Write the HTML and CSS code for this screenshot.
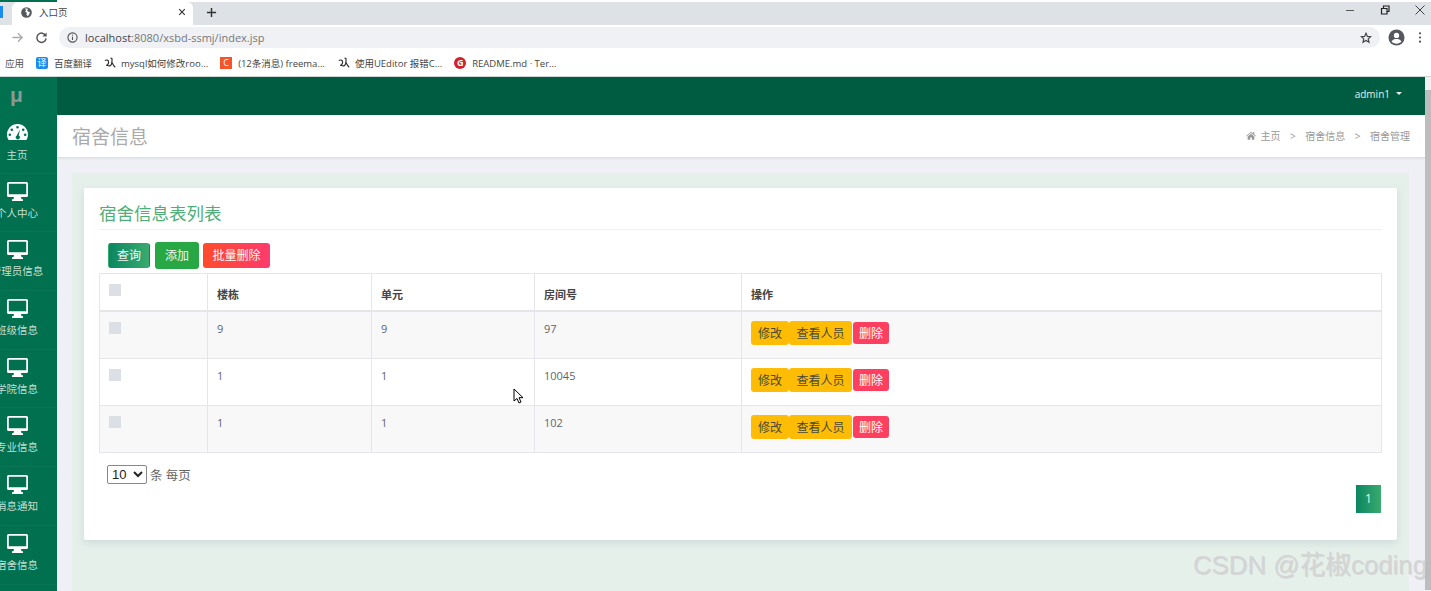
FILE: index.html
```html
<!DOCTYPE html>
<html lang="zh-CN">
<head>
    <meta charset="UTF-8">
    <title>入口页</title>
    <link rel="stylesheet" href="styles.css">
</head>
<body>
    <!-- 浏览器外框 -->
    <div class="top-edge"><span></span></div>
    <div class="tabstrip">
        <span class="prev-tab"></span>
        <div class="tab">
            <svg class="globe" viewBox="0 0 12 12"><circle cx="6" cy="6" r="5.800" fill="#55585c"/><path d="M3.500 1.800l2.300 1.200-1.300 1.800 1.800 1.400-.3 2.300 1.500 1.700 1.600-2.700.6-2-2.200-.6-.9-1.500 1.500-1.300-2-.6z" fill="#fff"/></svg>
            <span class="tab-title">入口页</span>
            <svg class="tab-close" viewBox="0 0 10 10"><path d="M1.500 1.500l7 7M8.500 1.500l-7 7" stroke="#333" stroke-width="1.400"/></svg>
        </div>
        <svg class="tab-new" viewBox="0 0 12 12"><path d="M6 1v10M1 6h10" stroke="#333" stroke-width="1.600"/></svg>
        <div class="win-btns">
            <svg viewBox="0 0 12 12"><path d="M2 6.500h8" stroke="#555" stroke-width="1"/></svg>
            <svg viewBox="0 0 12 12"><path d="M2.500 4.500h5.500v5.500h-5.500zM4.500 4.500v-2.500h5.500v5.500h-2" fill="none" stroke="#222" stroke-width="1.200"/></svg>
            <svg viewBox="0 0 12 12"><path d="M1.500 1.500l9 9M10.500 1.500l-9 9" stroke="#444" stroke-width="1"/></svg>
        </div>
    </div>
    <div class="toolbar">
        <svg class="nav-fwd" viewBox="0 0 14 14"><path d="M1.500 7h10.500M7.500 2.500l4.500 4.500-4.500 4.500" fill="none" stroke="#aaa" stroke-width="1.400"/></svg>
        <svg class="nav-reload" viewBox="0 0 14 14"><path d="M11.500 5a5 5 0 1 0 .5 3" fill="none" stroke="#555" stroke-width="1.600"/><path d="M12.500 1.500v4.500h-4.500z" fill="#555"/></svg>
        <div class="address">
            <svg class="info" viewBox="0 0 12 12"><circle cx="6" cy="6" r="5" fill="none" stroke="#555" stroke-width="1.200"/><path d="M6 5.200v3.600M6 3v1.200" stroke="#555" stroke-width="1.200"/></svg>
            <span class="url"><b>localhost</b>:8080/xsbd-ssmj/index.jsp</span>
            <svg class="star" viewBox="0 0 12 12"><path d="M6 1.300l1.400 3.100 3.300.3-2.500 2.200.8 3.300L6 8.500l-3 1.700.8-3.300L1.300 4.700l3.300-.3z" fill="none" stroke="#444" stroke-width="1.200"/></svg>
        </div>
        <svg class="avatar" viewBox="0 0 18 18"><circle cx="9" cy="9" r="8.500" fill="#55585c"/><circle cx="9" cy="6.800" r="2.800" fill="#fff"/><path d="M3.800 13.200c1.200-2 3.200-2.600 5.200-2.600s4 .6 5.200 2.600c-1.200 1.500-3.100 2.300-5.200 2.300s-4-.8-5.200-2.300z" fill="#fff"/></svg>
        <svg class="dots" viewBox="0 0 4 14"><circle cx="2" cy="2.500" r="1.200" fill="#555"/><circle cx="2" cy="7" r="1.200" fill="#555"/><circle cx="2" cy="11.500" r="1.200" fill="#555"/></svg>
    </div>
    <div class="bookmarks">
        <span class="bm-apps">应用</span>
        <a class="bm bm-1"><i class="bm-icon blue">译</i>百度翻译</a>
        <a class="bm bm-2"><svg class="bm-svg" viewBox="0 0 12 12"><path d="M.8 3.500c1.800-1 3.600-.5 3.800 1.300.2 2-1.300 3.600-2.500 3.500M3.500 8.300c1.700 1.200 3.300.6 4-1.300.5-1.600.7-3.500.5-5.500M6.500 1l1.800.6M8 5.500c.8 1.800 1.800 3.500 3.200 4.700" fill="none" stroke="#333" stroke-width="1.200"/></svg>mysql如何修改roo...</a>
        <a class="bm bm-3"><i class="bm-icon orange">C</i>(12条消息) freema...</a>
        <a class="bm bm-4"><svg class="bm-svg" viewBox="0 0 12 12"><path d="M.8 3.500c1.800-1 3.600-.5 3.800 1.300.2 2-1.300 3.600-2.500 3.500M3.500 8.300c1.700 1.200 3.300.6 4-1.300.5-1.600.7-3.500.5-5.500M6.500 1l1.800.6M8 5.500c.8 1.800 1.800 3.500 3.200 4.700" fill="none" stroke="#333" stroke-width="1.200"/></svg>使用UEditor 报错C...</a>
        <a class="bm bm-5"><i class="bm-icon red">G</i>README.md · Ter...</a>
    </div>

    <!-- 页面 -->
    <div class="app">
        <aside class="sidebar">
            <div class="logo">μ</div>
            <div class="side-item">
                <svg class="side-icon gauge" viewBox="0 0 21 16"><path fill-rule="evenodd" d="M10.500 0C4.700 0 0 4.700 0 10.500c0 2 .6 3.900 1.600 5.500h17.800c1-1.600 1.600-3.500 1.600-5.500C21 4.700 16.300 0 10.500 0zM10.500 2a1.300 1.300 0 1 1 0 2.600 1.300 1.300 0 0 1 0-2.600zM4.800 4.400a1.300 1.300 0 1 1 0 2.600 1.300 1.300 0 0 1 0-2.600zM16.200 4.400a1.300 1.300 0 1 1 0 2.600 1.300 1.300 0 0 1 0-2.600zM2.800 9.500a1.300 1.300 0 1 1 0 2.600 1.300 1.300 0 0 1 0-2.600zM18.200 9.500a1.300 1.300 0 1 1 0 2.600 1.300 1.300 0 0 1 0-2.600zM13 5.500l-1.300 6a2 2 0 1 1-2.100.2z"/></svg>
                <span>主页</span>
            </div>
            <div class="side-item"><svg class="side-icon" viewBox="0 0 21 19"><use href="#desktop"/></svg><span>个人中心</span></div>
            <div class="side-item"><svg class="side-icon" viewBox="0 0 21 19"><use href="#desktop"/></svg><span>管理员信息</span></div>
            <div class="side-item"><svg class="side-icon" viewBox="0 0 21 19"><use href="#desktop"/></svg><span>班级信息</span></div>
            <div class="side-item"><svg class="side-icon" viewBox="0 0 21 19"><use href="#desktop"/></svg><span>学院信息</span></div>
            <div class="side-item"><svg class="side-icon" viewBox="0 0 21 19"><use href="#desktop"/></svg><span>专业信息</span></div>
            <div class="side-item"><svg class="side-icon" viewBox="0 0 21 19"><use href="#desktop"/></svg><span>消息通知</span></div>
            <div class="side-item"><svg class="side-icon" viewBox="0 0 21 19"><use href="#desktop"/></svg><span>宿舍信息</span></div>
        </aside>

        <div class="main">
            <header class="navbar">
                <span class="user">admin1</span>
                <span class="caret"></span>
            </header>
            <div class="pagebar">
                <h2 class="page-title">宿舍信息</h2>
                <div class="crumbs">
                    <svg class="home" viewBox="0 0 12 10"><path d="M6 .5L0 5.500l.6.7L6 1.800l5.400 4.400.6-.7-2-1.700V1H8.500v1.300zM2 6.300V10h3V7.500h2V10h3V6.300L6 3z" fill="#999"/></svg>
                    <span>主页</span>
                    <i class="sep">&gt;</i>
                    <span>宿舍信息</span>
                    <i class="sep">&gt;</i>
                    <span>宿舍管理</span>
                </div>
            </div>
            <div class="content">
                <div class="content-inner">
                    <div class="card">
                        <h3 class="card-title">宿舍信息表列表</h3>
                        <div class="actions">
                            <button class="btn btn-query">查询</button>
                            <button class="btn btn-add">添加</button>
                            <button class="btn btn-batch">批量删除</button>
                        </div>
                        <table class="grid">
                            <colgroup>
                                <col class="c1"><col class="c2"><col class="c3"><col class="c4"><col>
                            </colgroup>
                            <thead>
                                <tr>
                                    <th><span class="check"></span></th>
                                    <th>楼栋</th>
                                    <th>单元</th>
                                    <th>房间号</th>
                                    <th>操作</th>
                                </tr>
                            </thead>
                            <tbody>
                                <tr class="odd first">
                                    <td><span class="check"></span></td>
                                    <td>9</td>
                                    <td>9</td>
                                    <td>97</td>
                                    <td class="ops"><a class="op op-edit">修改</a><a class="op op-view">查看人员</a><a class="op op-del">删除</a></td>
                                </tr>
                                <tr>
                                    <td><span class="check"></span></td>
                                    <td>1</td>
                                    <td>1</td>
                                    <td>10045</td>
                                    <td class="ops"><a class="op op-edit">修改</a><a class="op op-view">查看人员</a><a class="op op-del">删除</a></td>
                                </tr>
                                <tr class="odd">
                                    <td><span class="check"></span></td>
                                    <td>1</td>
                                    <td>1</td>
                                    <td>102</td>
                                    <td class="ops"><a class="op op-edit">修改</a><a class="op op-view">查看人员</a><a class="op op-del">删除</a></td>
                                </tr>
                            </tbody>
                        </table>
                        <div class="table-foot">
                            <select class="page-size"><option>10</option></select>
                            <span>条 每页</span>
                        </div>
                        <div class="pager"><a class="page-num">1</a></div>
                    </div>
                </div>
            </div>
        </div>

        <div class="scrollbar"><span></span></div>
    </div>

    <!-- 鼠标和水印 -->
    <svg class="cursor" viewBox="0 0 11 16"><path d="M1 1v12l3-2.500 2 4.500 2-1-2-4.300h4z" fill="#fff" stroke="#000" stroke-width="1"/></svg>
    <div class="watermark">CSDN @花椒coding</div>

    <svg class="defs" width="0" height="0">
        <symbol id="desktop" viewBox="0 0 21 19">
            <path fill="#fff" fill-rule="evenodd" d="M1.500 0h18A1.500 1.500 0 0 1 21 1.500v12a1.500 1.500 0 0 1-1.500 1.500h-5.500l.5 2.200h1.500V19H5v-1.800h1.500L7 15H1.500A1.500 1.500 0 0 1 0 13.500v-12A1.500 1.500 0 0 1 1.500 0zM1.800 1.800v10.400h17.400V1.800z"/>
        </symbol>
    </svg>
</body>
</html>
```

FILE: styles.css
```css
* {
    box-sizing: border-box;
}

html, body {
    height: 591px;
}

body {
    margin: 0;
    overflow: hidden;
    position: relative;
    background: #fff;
    font-family: "Open Sans", "Noto Sans CJK SC", sans-serif;
    font-size: 11px;
    color: #555;
}

/* 浏览器外框 */
.top-edge {
    height: 2px;
    background: #fff;
}

.top-edge span {
    display: block;
    width: 57px;
    height: 2px;
    background: #00704f;
}

.tabstrip {
    display: flex;
    align-items: center;
    height: 23px;
    background: #dee1e6;
}

.prev-tab {
    width: 3px;
    height: 12px;
    margin-bottom: 3px;
    background: #1a8cf0;
}

.tab {
    display: flex;
    align-items: center;
    width: 181px;
    height: 23px;
    margin-left: 9px;
    padding: 0 0 3px 9px;
    background: #fff;
    border-radius: 6px 6px 0 0;
}

.globe {
    width: 11px;
    height: 11px;
}

.tab-title {
    margin-left: 7px;
    font-size: 9.500px;
    color: #444;
}

.tab-close {
    width: 8px;
    height: 8px;
    margin-left: 110px;
}

.tab-new {
    width: 11px;
    height: 11px;
    margin: 0 0 3px 13px;
}

.win-btns {
    display: flex;
    gap: 23px;
    margin: 0 5px 7px auto;
}

.win-btns svg {
    width: 12px;
    height: 12px;
}

.toolbar {
    display: flex;
    align-items: center;
    height: 25px;
    background: #fff;
}

.nav-fwd {
    width: 13px;
    height: 13px;
    margin-left: 11px;
}

.nav-reload {
    width: 13px;
    height: 13px;
    margin-left: 11px;
}

.address {
    display: flex;
    align-items: center;
    width: 1321px;
    height: 21px;
    margin-left: 11px;
    padding: 0 7px 0 8px;
    background: #eff1f5;
    border-radius: 11px;
}

.info {
    width: 11px;
    height: 11px;
}

.url {
    margin-left: 7px;
    font-size: 11px;
    color: #777;
}

.url b {
    font-weight: 400;
    color: #444;
}

.star {
    width: 12px;
    height: 12px;
    margin-left: auto;
    margin-right: 1px;
}

.avatar {
    width: 17px;
    height: 17px;
    margin-left: 8px;
}

.dots {
    width: 4px;
    height: 13px;
    margin-left: 13px;
}

.bookmarks {
    display: flex;
    align-items: center;
    height: 27px;
    background: #fff;
    font-size: 9.500px;
    color: #444;
    border-bottom: 1px solid #cfd6d3;
}

.bm-apps {
    margin-left: 5px;
    color: #555;
}

.bm {
    display: flex;
    align-items: center;
    white-space: nowrap;
}

.bm-1 { margin-left: 12px; }
.bm-2 { margin-left: 12px; }
.bm-3 { margin-left: 12px; }
.bm-4 { margin-left: 13px; }
.bm-5 { margin-left: 12px; }

.bm-icon {
    display: inline-block;
    width: 12px;
    height: 12px;
    margin-right: 6px;
    border-radius: 2px;
    color: #fff;
    font-style: normal;
    font-size: 9px;
    line-height: 12px;
    text-align: center;
}

.bm-icon.blue {
    background: #1a8cf0;
}

.bm-icon.orange {
    background: #f4552b;
    border-radius: 0;
}

.bm-icon.red {
    background: #d3202e;
    border-radius: 6px;
    font-weight: 700;
}

.bm-svg {
    width: 12px;
    height: 12px;
    margin-right: 5px;
}

/* 页面布局 */
.app {
    display: flex;
    height: 514px;
}

.sidebar {
    flex: none;
    width: 57px;
    overflow: hidden;
    background: #00704f;
}

.logo {
    height: 38px;
    padding: 3px 0 0 10px;
    font-family: "Liberation Sans", sans-serif;
    font-size: 21px;
    font-weight: 700;
    line-height: 30px;
    color: #8a9a94;
}

.side-item {
    display: flex;
    flex-direction: column;
    align-items: center;
    width: 57px;
    height: 58.700px;
    padding: 8px 23px 0 0;
    color: #c4ded3;
    font-size: 10.500px;
    line-height: 14px;
    white-space: nowrap;
    border-bottom: 1px solid rgba(255, 255, 255, .035);
}

.side-item span {
    margin-top: 5px;
}

.side-icon {
    flex: none;
    width: 21px;
    height: 19px;
}

.gauge {
    fill: #fff;
    height: 16px;
    margin: 1px 0 3px;
}

.main {
    flex: 1;
    min-width: 0;
    display: flex;
    flex-direction: column;
    background: #eef0f6;
}

.navbar {
    display: flex;
    align-items: center;
    justify-content: flex-end;
    flex: none;
    height: 38px;
    padding: 0 23px 5px 0;
    background: #005c41;
    color: #e4efe9;
    font-size: 10px;
}

.caret {
    margin-left: 6px;
    border: 3px solid transparent;
    border-top-color: #e4efe9;
    border-bottom: 0;
}

.pagebar {
    display: flex;
    align-items: center;
    justify-content: space-between;
    flex: none;
    height: 43px;
    padding: 0 15px 1px 15px;
    background: #fff;
    border-bottom: 1px solid #dcdfe4;
    box-shadow: 0 1px 2px rgba(0, 0, 0, .05);
}

.page-title {
    margin: 0;
    font-size: 19px;
    font-weight: 400;
    color: #aaa;
}

.crumbs {
    display: flex;
    align-items: center;
    font-size: 10px;
    color: #999;
}

.home {
    width: 10px;
    height: 9px;
    margin-right: 5px;
}

.sep {
    margin: 0 9.500px;
    font-style: normal;
    font-size: 10px;
}

.content {
    flex: 1;
    min-height: 0;
    padding: 15px 16px 0 15px;
}

.content-inner {
    height: 100%;
    padding: 15px 12px 0;
    background: #e6f0eb;
}

.card {
    height: 352px;
    padding: 14px 15px 0;
    background: #fff;
    border-radius: 2px;
    box-shadow: 0 3px 8px rgba(90, 120, 140, .18);
}

.card-title {
    margin: 0;
    height: 28px;
    font-size: 17.500px;
    font-weight: 400;
    line-height: 22px;
    color: #4fae78;
    border-bottom: 1px solid #eef0f2;
}

.actions {
    display: flex;
    align-items: center;
    gap: 5px;
    height: 27px;
    margin: 12px 0 4px 9px;
}

.btn {
    height: 25px;
    padding: 0 0 2px;
    border: 1px solid transparent;
    border-radius: 3px;
    color: #f2faf6;
    font-family: inherit;
    font-size: 12px;
}

.btn-query {
    width: 42px;
    background: linear-gradient(to right, #0a8660, #3aab6f);
}

.btn-add {
    width: 44px;
    height: 27px;
    background: #28a745;
}

.btn-batch {
    width: 67px;
    margin-left: -1px;
    background: linear-gradient(to right, #ff4b2b, #ff3b6c);
}

.grid {
    width: 1283px;
    border-collapse: collapse;
    table-layout: fixed;
    font-size: 11px;
    color: #5f6470;
}

.c1 { width: 108px; }
.c2 { width: 164px; }
.c3 { width: 163px; }
.c4 { width: 207px; }

.grid th,
.grid td {
    padding: 10px 9px 0;
    vertical-align: top;
    text-align: left;
    border: 1px solid #e4e6ec;
}

.grid th {
    height: 37px;
    padding-top: 12px;
    font-weight: 700;
    color: #444;
    border-bottom-width: 2px;
}

.grid th:first-child {
    padding-top: 10px;
}

.grid td {
    height: 47px;
    line-height: 14px;
}

.grid .first td {
    height: 48px;
}

.grid .odd td {
    background: #f8f8f9;
}

.check {
    display: block;
    width: 12px;
    height: 12px;
    background: #dcdfe6;
}

.grid td.ops {
    padding-top: 9px;
    white-space: nowrap;
    font-size: 0;
}

.op {
    display: inline-block;
    vertical-align: middle;
    font-size: 12px;
    text-align: center;
    border-radius: 3px;
}

.op-edit,
.op-view {
    height: 24px;
    line-height: 25px;
    background: #ffbc05;
    color: #4a4a3a;
}

.op-edit { width: 38px; }
.op-view { width: 63px; }

.op-del {
    width: 36px;
    height: 22px;
    margin-left: 1px;
    line-height: 23px;
    background: #ff3f5f;
    color: #fff;
}

.table-foot {
    display: flex;
    align-items: center;
    gap: 3px;
    margin: 12px 0 0 8px;
    font-size: 12.500px;
    color: #666;
}

.page-size {
    width: 40px;
    height: 19px;
    padding: 0;
    background: #fff;
    border: 1px solid #888;
    border-radius: 2px;
    font-family: "Liberation Sans", sans-serif;
    font-size: 13px;
    color: #222;
}

.pager {
    display: flex;
    justify-content: flex-end;
    margin-top: 1px;
    padding-right: 1px;
}

.page-num {
    width: 25px;
    height: 28px;
    background: linear-gradient(to right, #0a8660, #3aab6f);
    color: #e8f6ef;
    font-size: 12px;
    line-height: 28px;
    text-align: center;
}

.scrollbar {
    flex: none;
    width: 6px;
    padding-top: 13px;
    background: #f1f1f1;
}

.scrollbar span {
    display: block;
    height: 500px;
    background: #bdbdbd;
}

/* 覆盖层 */
.cursor {
    position: absolute;
    left: 513px;
    top: 388px;
    width: 11px;
    height: 16px;
}

.watermark {
    position: absolute;
    right: 4px;
    bottom: 10px;
    font-family: "Liberation Sans", "Noto Sans CJK SC", sans-serif;
    font-size: 25.800px;
    line-height: 32px;
    white-space: nowrap;
    color: #d4d4d4;
    text-shadow: 1px 1px 0 rgba(150, 150, 150, .25);
}

.defs {
    position: absolute;
}
```
